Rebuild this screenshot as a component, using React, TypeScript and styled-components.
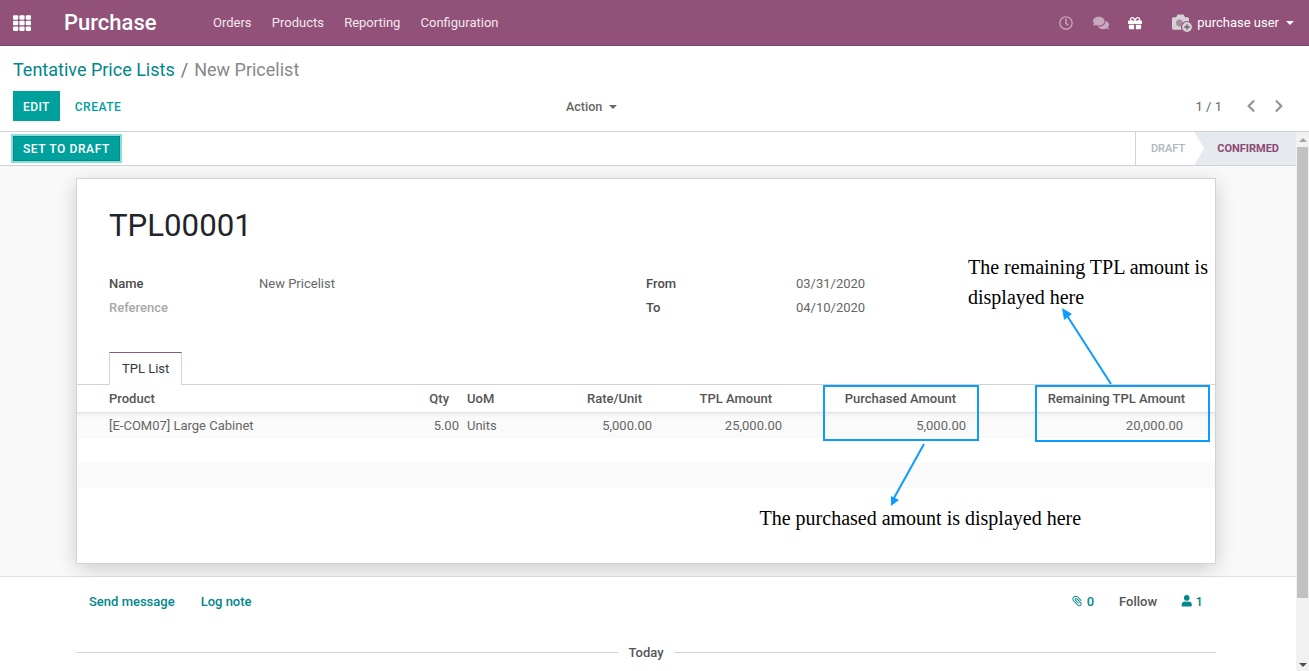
import React from 'react';
import styled, { createGlobalStyle } from 'styled-components';
import { FaTh, FaRegClock, FaComments, FaGift, FaUser, FaChevronLeft, FaChevronRight } from 'react-icons/fa';
import { AiOutlinePaperClip } from 'react-icons/ai';

const GlobalStyle = createGlobalStyle`
  html, body { margin: 0; padding: 0; height: 100%; overflow: hidden; }
  body { font-family: Roboto, "Noto Sans", sans-serif; font-size: 13px; color: #4c4c4c; background: #fff; }
  * { box-sizing: border-box; }
`;

const Page = styled.div`
  position: relative;
  width: 1309px;
  height: 671px;
  overflow: hidden;
`;

const Navbar = styled.header`
  height: 46px;
  display: flex;
  align-items: center;
  background: #915178;
  border-bottom: 1px solid #7a4465;
  color: #fff;
  padding: 0 15px 0 13px;
`;

const AppsButton = styled.span`
  display: flex;
  width: 51px;
  font-size: 18px;
`;

const Brand = styled.span`
  font-size: 22px;
  font-weight: 500;
  width: 149px;
`;

const NavMenu = styled.nav`
  display: flex;
  gap: 20.2px;
  flex: 1;
  font-size: 13px;
  color: #f2e8ee;
`;

const NavTools = styled.div`
  display: flex;
  align-items: center;
  font-size: 13px;
`;

const NavIcon = styled.span<{ $dim?: boolean; $gap: number; $size?: number }>`
  display: flex;
  font-size: ${(p) => p.$size ?? 14}px;
  margin-right: ${(p) => p.$gap}px;
  opacity: ${(p) => (p.$dim ? 0.5 : 1)};
`;

const Caret = styled.span<{ $color?: string }>`
  display: inline-block;
  margin-left: 7px;
  border-top: 4px solid ${(p) => p.$color || '#fff'};
  border-left: 4px solid transparent;
  border-right: 4px solid transparent;
  vertical-align: 2px;
`;

const ControlPanel = styled.section`
  height: 86px;
  border-bottom: 1px solid #ced4da;
  padding: 13px 13px 0;
`;

const Breadcrumb = styled.div`
  font-size: 18px;
  line-height: 22px;
  color: #888;
`;

const CrumbLink = styled.a`
  color: #00878a;
`;

const Separator = styled.span`
  margin: 0 6px;
  color: #6c757d;
`;

const ControlRow = styled.div`
  display: grid;
  grid-template-columns: 553px 1fr auto;
  align-items: center;
  height: 30px;
  margin-top: 10px;
`;

const ButtonGroup = styled.div`
  display: flex;
  align-items: center;
  height: 30px;
`;

const PrimaryButton = styled.button`
  height: 30px;
  padding: 1px 10px 0;
  border: 0;
  background: #00a09d;
  color: #fff;
  font: 500 12px Roboto, sans-serif;
  letter-spacing: 0.4px;
`;

const LinkButton = styled.button`
  height: 30px;
  margin-left: 5px;
  padding: 1px 10px 0;
  border: 0;
  background: none;
  color: #00a09d;
  font: 500 12px Roboto, sans-serif;
  letter-spacing: 0.5px;
`;

const ActionMenu = styled.div`
  font-weight: 500;
  font-size: 12.5px;
  color: #666;
`;

const Pager = styled.div`
  display: flex;
  align-items: center;
  color: #666;
  padding-right: 10px;
`;

const PagerValue = styled.span`
  margin-right: 22px;
`;

const PagerArrows = styled.span`
  display: flex;
  gap: 14px;
  color: #8f969c;
  font-size: 14px;
`;

const Body = styled.div`
  display: flex;
  height: 539px;
`;

const Content = styled.main`
  flex: 1;
  min-width: 0;
  overflow: hidden;
`;

const StatusBar = styled.div`
  display: flex;
  justify-content: space-between;
  height: 34px;
  border-bottom: 1px solid #ced4da;
  background: #fff;
`;

const DraftButton = styled.button`
  height: 25px;
  margin: 4px 0 0 13px;
  padding: 0 9px;
  border: 1px solid #008c89;
  background: #00a09d;
  color: #fff;
  font: 500 12px Roboto, sans-serif;
  letter-spacing: 0.6px;
  box-shadow: 0 0 0 2px #8edcd9;
`;

const StatusSteps = styled.div`
  display: flex;
  border-left: 1px solid #ced4da;
`;

const Step = styled.span<{ $active?: boolean }>`
  display: flex;
  align-items: center;
  font-size: 11px;
  font-weight: ${(p) => (p.$active ? 700 : 500)};
  color: ${(p) => (p.$active ? '#8a4a74' : '#adb5bd')};
  background: ${(p) => (p.$active ? '#e6e9ed' : 'transparent')};
  padding: ${(p) => (p.$active ? '0 17px 0 23px' : '0 9px 0 15px')};
  clip-path: ${(p) => (p.$active ? 'polygon(0 0, 100% 0, 100% 100%, 0 100%, 10px 50%)' : 'none')};
`;

const SheetArea = styled.div`
  height: 411px;
  padding: 12px 0 0 76px;
  background: #f9f9f9;
  border-bottom: 1px solid #dee2e6;
`;

const Sheet = styled.article`
  width: 1140px;
  height: 386px;
  background: #fff;
  border: 1px solid #ced4da;
  box-shadow: 0 5px 20px -1px rgba(0, 0, 0, 0.2);
`;

const Title = styled.h1`
  margin: 0;
  padding: 27px 0 0 32px;
  font-size: 31.2px;
  line-height: 40px;
  font-weight: 400;
  color: #212529;
`;

const FieldsGrid = styled.div`
  display: grid;
  grid-template-columns: 150px 387px 150px 1fr;
  grid-auto-rows: 24px;
  align-items: center;
  margin-top: 25px;
  padding-left: 32px;
`;

const FieldLabel = styled.label<{ $muted?: boolean }>`
  font-weight: 500;
  color: ${(p) => (p.$muted ? '#a8a8a8' : '#4c4c4c')};
`;

const FieldValue = styled.span`
  color: #666;
`;

const Tabs = styled.div`
  height: 33px;
  margin-top: 33px;
  padding-left: 32px;
  border-bottom: 1px solid #ced4da;
`;

const Tab = styled.span`
  display: inline-block;
  height: 33px;
  padding: 0 12px;
  line-height: 32px;
  background: #fff;
  color: #343a40;
  border: 1px solid #ced4da;
  border-top: 1px solid #875a7b;
  border-bottom: 0;
`;

const COLUMNS = '348px 37px 78px 115px 130px 184px 217px 29px';

const HeaderRow = styled.div`
  display: grid;
  grid-template-columns: ${COLUMNS};
  align-items: center;
  height: 28px;
  border-bottom: 1px solid #dee2e6;
  font-weight: 500;
  color: #555;
`;

const DataRow = styled.div<{ $shaded?: boolean; $inset?: boolean }>`
  display: grid;
  grid-template-columns: ${COLUMNS};
  align-items: center;
  height: 25px;
  color: #666;
  background: ${(p) => (p.$shaded ? '#fafafa' : '#fff')};
  box-shadow: ${(p) => (p.$inset ? 'inset 0 5px 5px -4px rgba(0,0,0,0.08)' : 'none')};
`;

const Cell = styled.span<{ $right?: number; $left?: number }>`
  white-space: nowrap;
  text-align: ${(p) => (p.$right !== undefined ? 'right' : 'left')};
  padding-right: ${(p) => p.$right ?? 0}px;
  padding-left: ${(p) => p.$left ?? 0}px;
`;

const Chatter = styled.section`
  background: #fff;
  padding: 0 80px 0 76px;
`;

const ChatterTop = styled.div`
  display: flex;
  align-items: center;
  height: 48px;
  padding-left: 13px;
`;

const ChatterLink = styled.a`
  color: #00878a;
  font-weight: 500;
  margin-right: 26px;
`;

const ChatterSide = styled.div`
  margin-left: auto;
  display: flex;
  align-items: center;
  font-weight: 500;
  padding-right: 13px;
`;

const Counter = styled.span`
  display: flex;
  align-items: center;
  gap: 3px;
  color: #00878a;
  svg { font-size: 11.5px; }
`;

const ClipIcon = styled(AiOutlinePaperClip)`
  transform: scaleX(-1);
  && { font-size: 14px; }
`;

const FollowLabel = styled.span`
  margin: 0 24px 0 25px;
  color: #555;
`;

const DateLine = styled.div`
  display: flex;
  align-items: center;
  gap: 10px;
  margin-top: 20px;
  font-weight: 500;
  color: #555;
  &::before, &::after {
    content: '';
    flex: 1;
    border-top: 1px solid #ced4da;
  }
`;

const Scrollbar = styled.div`
  width: 13px;
  background: #f1f1f1;
  display: flex;
  flex-direction: column;
  align-items: center;
`;

const ScrollArrow = styled.span<{ $down?: boolean }>`
  width: 0;
  height: 0;
  margin-top: ${(p) => (p.$down ? 'auto' : '6px')};
  margin-bottom: ${(p) => (p.$down ? '4px' : '0')};
  border-left: 4px solid transparent;
  border-right: 4px solid transparent;
  ${(p) => (p.$down ? 'border-top: 4px solid #505050;' : 'border-bottom: 4px solid #a3a3a3;')}
`;

const ScrollThumb = styled.span`
  width: 11px;
  height: 451px;
  margin-top: 5px;
  background: #c1c1c1;
`;

const Note = styled.p<{ $x: number; $y: number }>`
  position: absolute;
  left: ${(p) => p.$x}px;
  top: ${(p) => p.$y}px;
  margin: 0;
  font: 20px/30px "Liberation Serif", serif;
  color: #000;
  white-space: pre;
`;

const Highlight = styled.div<{ $x: number; $y: number; $w: number; $h: number }>`
  position: absolute;
  left: ${(p) => p.$x}px;
  top: ${(p) => p.$y}px;
  width: ${(p) => p.$w}px;
  height: ${(p) => p.$h}px;
  border: 2px solid #0c9bff;
`;

const ArrowLayer = styled.svg`
  position: absolute;
  left: 0;
  top: 0;
  pointer-events: none;
`;

const AvatarIcon = styled.svg`
  margin-right: 4px;
`;

const CameraAvatar = () => (
  <AvatarIcon width="21" height="20" viewBox="0 0 21 20">
    <path d="M0 6c0-1 .7-1.8 1.700-1.800h2.500L5.600 1.600h6L13 4.200h2.300c1 0 1.700.8 1.700 1.800v9c0 1-.7 1.800-1.700 1.800H1.700C.7 16.800 0 16 0 15z" fill="#d6d1d4" />
    <circle cx="7.500" cy="10" r="3.400" fill="#a98ba0" />
    <circle cx="15" cy="14" r="5.500" fill="#d6d1d4" stroke="#915178" strokeWidth="1.200" />
    <path d="M15 11.300v5.400M12.300 14h5.400" stroke="#6e5a66" strokeWidth="1.300" />
  </AvatarIcon>
);

const lines = [
  { name: '[E-COM07] Large Cabinet', qty: '5.00', uom: 'Units', rate: '5,000.00', amount: '25,000.00', purchased: '5,000.00', remaining: '20,000.00' },
];

const App: React.FC = () => (
  <Page>
    <GlobalStyle />
    <Navbar>
      <AppsButton><FaTh /></AppsButton>
      <Brand>Purchase</Brand>
      <NavMenu>
        <span>Orders</span>
        <span>Products</span>
        <span>Reporting</span>
        <span>Configuration</span>
      </NavMenu>
      <NavTools>
        <NavIcon $dim $gap={20}><FaRegClock /></NavIcon>
        <NavIcon $dim $gap={19} $size={16}><FaComments /></NavIcon>
        <NavIcon $gap={30}><FaGift /></NavIcon>
        <CameraAvatar />
        <span>purchase user<Caret /></span>
      </NavTools>
    </Navbar>

    <ControlPanel>
      <Breadcrumb>
        <CrumbLink>Tentative Price Lists</CrumbLink>
        <Separator>/</Separator>
        New Pricelist
      </Breadcrumb>
      <ControlRow>
        <ButtonGroup>
          <PrimaryButton>EDIT</PrimaryButton>
          <LinkButton>CREATE</LinkButton>
        </ButtonGroup>
        <ActionMenu>Action<Caret $color="#666" /></ActionMenu>
        <Pager>
          <PagerValue>1 / 1</PagerValue>
          <PagerArrows>
            <FaChevronLeft />
            <FaChevronRight />
          </PagerArrows>
        </Pager>
      </ControlRow>
    </ControlPanel>

    <Body>
      <Content>
        <StatusBar>
          <DraftButton>SET TO DRAFT</DraftButton>
          <StatusSteps>
            <Step>DRAFT</Step>
            <Step $active>CONFIRMED</Step>
          </StatusSteps>
        </StatusBar>

        <SheetArea>
          <Sheet>
            <Title>TPL00001</Title>
            <FieldsGrid>
              <FieldLabel>Name</FieldLabel>
              <FieldValue>New Pricelist</FieldValue>
              <FieldLabel>From</FieldLabel>
              <FieldValue>03/31/2020</FieldValue>
              <FieldLabel $muted>Reference</FieldLabel>
              <FieldValue />
              <FieldLabel>To</FieldLabel>
              <FieldValue>04/10/2020</FieldValue>
            </FieldsGrid>
            <Tabs><Tab>TPL List</Tab></Tabs>
            <HeaderRow>
              <Cell $left={32}>Product</Cell>
              <Cell $right={13}>Qty</Cell>
              <Cell $left={5}>UoM</Cell>
              <Cell $right={13}>Rate/Unit</Cell>
              <Cell $right={13}>TPL Amount</Cell>
              <Cell $right={13}>Purchased Amount</Cell>
              <Cell $right={1}>Remaining TPL Amount</Cell>
              <span />
            </HeaderRow>
            {lines.map((line) => (
              <DataRow key={line.name} $shaded $inset>
                <Cell $left={32}>{line.name}</Cell>
                <Cell $right={3}>{line.qty}</Cell>
                <Cell $left={5}>{line.uom}</Cell>
                <Cell $right={3}>{line.rate}</Cell>
                <Cell $right={3}>{line.amount}</Cell>
                <Cell $right={3}>{line.purchased}</Cell>
                <Cell $right={3}>{line.remaining}</Cell>
                <span />
              </DataRow>
            ))}
            <DataRow />
            <DataRow $shaded />
          </Sheet>
        </SheetArea>

        <Chatter>
          <ChatterTop>
            <ChatterLink>Send message</ChatterLink>
            <ChatterLink>Log note</ChatterLink>
            <ChatterSide>
              <Counter><ClipIcon />0</Counter>
              <FollowLabel>Follow</FollowLabel>
              <Counter><FaUser />1</Counter>
            </ChatterSide>
          </ChatterTop>
          <DateLine>Today</DateLine>
        </Chatter>
      </Content>
      <Scrollbar>
        <ScrollArrow />
        <ScrollThumb />
        <ScrollArrow $down />
      </Scrollbar>
    </Body>

    <Highlight $x={823} $y={385} $w={156} $h={56} />
    <Highlight $x={1035} $y={385} $w={175} $h={57} />
    <ArrowLayer width="1309" height="671">
      <path d="M1111 384 L1066 314" stroke="#0c9bff" strokeWidth="2" />
      <polygon points="1062,308 1072,314 1064,320" fill="#0c9bff" />
      <path d="M924 444 L894 498" stroke="#0c9bff" strokeWidth="2" />
      <polygon points="891,506 891,496 899,500" fill="#0c9bff" />
    </ArrowLayer>
    <Note $x={968} $y={252}>{'The remaining TPL amount is\ndisplayed here'}</Note>
    <Note $x={759.5} $y={503}>The purchased amount is displayed here</Note>
  </Page>
);

export default App;
